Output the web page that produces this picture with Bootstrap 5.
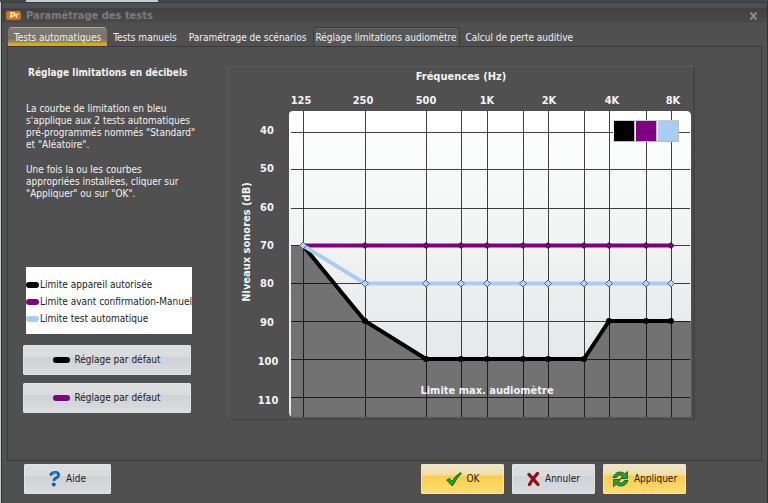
<!DOCTYPE html>
<html lang="fr">
<head>
<meta charset="utf-8">
<meta name="viewport" content="width=device-width, initial-scale=1">
<title>Paramétrage des tests</title>
<link rel="stylesheet" href="https://cdn.jsdelivr.net/npm/bootstrap@5.3.0/dist/css/bootstrap.min.css">
<style>
  body { background: #c4cccc; font-family: Tahoma, "DejaVu Sans Condensed", "DejaVu Sans", sans-serif; font-size: 10px; line-height: 12px; color: #f2f2f2; }
  .backdrop-strip { height: 2px; background: linear-gradient(to right, #45474c 0 26px, #c4d0d0 26px 158px, #45474c 158px); }
  .app-window { background: #505050; border: 1px solid #333; border-top-color: #3a3b40; margin-left: 1px; min-height: calc(100vh - 2px); }
  .title-bar { border-top: 5px solid #4d4f57; background: linear-gradient(#414141, #4a4a4a); height: 20px; padding: 0 9px 0 4px; color: #7c7c7c; }
  .title-bar h1 { font: bold 11px/14px "DejaVu Sans Condensed", "DejaVu Sans", sans-serif; }
  .close-btn { background: none; border: 0; padding: 0; line-height: 0; }
  .tab-strip { padding: 4px 6px 0; }
  .tab-strip .nav-link { color: #f0f0f0; padding: 4px 5px 3px; margin: 0; border: 1px solid transparent; border-bottom: 0; border-radius: 4px 4px 0 0; line-height: 12px; height: 20px; white-space: nowrap; }
  .tab-strip .nav-link.active { background: #575757; border-color: #3a3a3a; color: #f0f0f0; box-shadow: inset 0 1px #666; padding-left: 2px; padding-right: 2px; }
  .tab-strip .nav-link.hot { background: linear-gradient(#817a72 0, #77716b 55%, #b08f3c 78%, #d8a91e 80%, #d8a91e 100%); }
  .tab-panel { border: 1px solid #3a3a3a; margin: -1px 5px 0 5px; padding: 19px 66px 40px 15px; }
  .side { flex: 0 0 168px; min-width: 0; padding-top: 1px; }
  .side h2 { font-size: 10px; line-height: 12px; font-weight: bold; margin: 0 0 24px 5px; white-space: nowrap; }
  .side p { margin: 0 0 13px 3px; white-space: nowrap; }
  .legend-box { background: #fff; color: #222; margin: 67px 0 11px 3px; width: 166px; padding: 9px 0 7px; }
  .legend-box li { display: flex; align-items: center; height: 17px; gap: 1px; white-space: nowrap; }
  .stroke { display: inline-block; flex: none; width: 13px; height: 6px; border-radius: 3px; }
  .btn-app .stroke { width: 17px; }
  .ink-black { background: #000; }
  .ink-purple { background: #800080; }
  .ink-blue { background: #a8ccf2; }
  .btn-app { --bs-btn-color: #222; font-size: 10px; line-height: 12px; height: 30px; padding: 0; border: 1px solid #dfe1e3; border-radius: 1px; background: linear-gradient(#dcdedf 0, #d9dbdd 38%, #ced1d8 42%, #dadcde 100%); display: flex; align-items: center; justify-content: center; gap: 4px; color: #222; }
  .btn-app.gold { background: linear-gradient(#eee6c8 0, #f0dfa6 35%, #fbcd4b 40%, #fddc74 100%); border-color: #f2e6c0; }
  .chart-box { border: 1px solid #5b5b5b; border-right: 2px solid #434343; border-bottom-color: #434343; position: relative; margin-left: 37px; }
  .chart-box svg { display: block; width: 100%; height: auto; }
  .chart-box text { fill: #f4f4f4; font: bold 11px "DejaVu Sans Condensed", "DejaVu Sans", sans-serif; text-anchor: middle; }
  .ink-picker { position: absolute; top: 15%; right: 3%; }
  .ink-picker button { width: 22px; height: 22px; padding: 0; border: 1px solid #bbb; border-left-color: #eee; border-top-color: #ccc; }
  .footer-bar { padding: 3px 81px 9px 22px; }
  .footer-bar .btn-app { width: 83px; gap: 5px; }
  .footer-bar .help { width: 87px; }
</style>
<script src="https://cdn.jsdelivr.net/npm/bootstrap@5.3.0/dist/js/bootstrap.bundle.min.js"></script>
</head>
<body>
<div class="backdrop-strip"></div>
<div class="app-window d-flex flex-column">
  <header class="title-bar d-flex align-items-center justify-content-between">
    <div class="d-flex align-items-center gap-1">
      <svg width="16" height="9" viewBox="0 0 16 9" aria-hidden="true"><rect width="15" height="9" rx="2" fill="#cf7420"/><path d="M5 7V2h2q2 0 2 1.500T7 5H5M10.500 7V4q.5-1 2-.8" fill="none" stroke="#ffe9c8" stroke-width="1.400"/></svg>
      <h1 class="m-0">Paramétrage des tests</h1>
    </div>
    <button class="close-btn" type="button" aria-label="Fermer"><svg width="9" height="8" viewBox="0 0 9 8"><path d="M1.500.5l6 7M7.500.5l-6 7" stroke="#8c8c8c" stroke-width="2"/></svg></button>
  </header>
  <nav class="tab-strip nav nav-tabs border-0 flex-nowrap">
    <a class="nav-link hot" href="#">Tests automatiques</a>
    <a class="nav-link" href="#">Tests manuels</a>
    <a class="nav-link" href="#">Paramétrage de scénarios</a>
    <a class="nav-link active" href="#" aria-current="page">Réglage limitations audiomètre</a>
    <a class="nav-link" href="#">Calcul de perte auditive</a>
  </nav>
  <main class="tab-panel d-flex align-items-start flex-grow-1">
    <section class="side">
      <h2>Réglage limitations en décibels</h2>
      <p>La courbe de limitation en bleu<br>s'applique aux 2 tests automatiques<br>pré-programmés nommés "Standard"<br>et "Aléatoire".</p>
      <p>Une fois la ou les courbes<br>appropriées installées, cliquer sur<br>"Appliquer" ou sur "OK".</p>
      <ul class="legend-box list-unstyled">
        <li><span class="stroke ink-black"></span>Limite appareil autorisée</li>
        <li><span class="stroke ink-purple"></span>Limite avant confirmation-Manuel</li>
        <li><span class="stroke ink-blue"></span>Limite test automatique</li>
      </ul>
      <div class="d-grid gap-2">
        <button class="btn btn-app" type="button"><span class="stroke ink-black"></span>Réglage par défaut</button>
        <button class="btn btn-app" type="button"><span class="stroke ink-purple"></span>Réglage par défaut</button>
      </div>
    </section>
    <section class="chart-box flex-grow-1">
      <svg viewBox="0 0 464 352" role="img" aria-label="Niveaux sonores par fréquence">
        <defs>
          <linearGradient id="paper" x2="0" y2="1"><stop offset="0" stop-color="#fff"/><stop offset=".35" stop-color="#f4f5f5"/><stop offset=".8" stop-color="#e6e8e9"/></linearGradient>
          <marker id="dotBlack" markerUnits="userSpaceOnUse" markerWidth="8" markerHeight="8" refX="4" refY="4"><circle cx="4" cy="4" r="3"/></marker>
          <marker id="dotPurple" markerUnits="userSpaceOnUse" markerWidth="8" markerHeight="8" refX="4" refY="4"><path d="M4 1l3 3-3 3-3-3z" fill="#800080" stroke="#38003c"/></marker>
          <marker id="dotBlue" markerUnits="userSpaceOnUse" markerWidth="10" markerHeight="10" refX="5" refY="5"><path d="M5 1.500l3.500 3.500-3.500 3.500-3.500-3.500z" fill="#b4d4f6" stroke="#52677c"/></marker>
        </defs>
        <path d="M60 345V48q0-4 4-4h393q5 0 5 5v301H64q-4 0-4-5z" fill="url(#paper)"/>
        <path d="M62 178.500H74L136 254 197 292H355L380 254H462V350H62z" fill="#727272"/>
        <path d="M74.500 44V350M136.500 44V350M197.500 44V350M232.500 44V350M258.500 44V350M294.500 44V350M319.500 44V350M355.500 44V350M380.500 44V350M417.500 44V350M442.500 44V350M62 65.500H461M62 102.500H461M62 141.500H461M62 178.500H461M62 216.500H461M62 254.500H461M62 292.500H461M62 330.500H461" stroke="#000" stroke-opacity=".75"/>
        <path d="M74 178.500H442" stroke="#800080" stroke-width="4"/>
        <path d="M74 178.500L136 254 197 292 232 292 258 292 294 292 319 292 355 292 380 254 417 254 442 254" fill="none" stroke="#000" stroke-width="4" marker-mid="url(#dotBlack)" marker-end="url(#dotBlack)"/>
        <path d="M74 178.500H136H197H232H258H294H319H355H380H417H442" fill="none" marker-mid="url(#dotPurple)" marker-end="url(#dotPurple)"/>
        <path d="M74 178.500L136 216.500H197H232H258H294H319H355H380H417H442" fill="none" stroke="#a8ccf2" stroke-width="4" marker-start="url(#dotBlue)" marker-mid="url(#dotBlue)" marker-end="url(#dotBlue)"/>
        <g>
          <text x="232" y="13">Fréquences (Hz)</text>
          <text x="72" y="37">125</text><text x="134" y="37">250</text><text x="197" y="37">500</text><text x="258" y="37">1K</text><text x="320" y="37">2K</text><text x="383" y="37">4K</text><text x="444" y="37">8K</text>
          <text x="38" y="67">40</text><text x="38" y="105">50</text><text x="38" y="144">60</text><text x="38" y="182">70</text><text x="38" y="220">80</text><text x="38" y="259">90</text><text x="39" y="298">100</text><text x="39" y="337">110</text>
          <text transform="translate(21 175) rotate(-90)">Niveaux sonores (dB)</text>
          <text x="258" y="327">Limite max. audiomètre</text>
        </g>
      </svg>
      <div class="ink-picker d-flex">
        <button class="ink-black" type="button" aria-label="Noir"></button>
        <button class="ink-purple" type="button" aria-label="Violet"></button>
        <button class="ink-blue" type="button" aria-label="Bleu"></button>
      </div>
    </section>
  </main>
  <footer class="footer-bar d-flex align-items-center gap-2">
    <button class="btn btn-app help me-auto" type="button"><svg width="12" height="16" viewBox="0 0 12 16"><path d="M1.500 4.500q1-3 5-3 3.500 0 3 3-.5 2-3.500 3-1 .6-1 2.500" fill="none" stroke="#1763a8" stroke-width="3"/><circle cx="4.800" cy="13.500" r="2" fill="#1763a8"/><path d="M3 3q2-1.500 4.500-1" stroke="#4fa3dc" fill="none"/></svg>Aide</button>
    <button class="btn btn-app gold" type="button"><svg width="16" height="14" viewBox="0 0 16 14"><path d="M.8 8l2.700-1.500 2.500 3Q9.500 3.500 14.500.6l.8.7Q10.500 6 7 13.300H5.400z" fill="#1fa52b" stroke="#0b6a18"/></svg>OK</button>
    <button class="btn btn-app" type="button"><svg width="13" height="14" viewBox="0 0 13 14"><path d="M2 2.500Q5 5.500 11 12.500M10.500 1.500Q6 6 2.500 12.500" fill="none" stroke="#8d1218" stroke-width="3.200" stroke-linecap="round"/></svg>Annuler</button>
    <button class="btn btn-app gold" type="button"><svg width="17" height="16" viewBox="0 0 17 16"><g fill="#22a03a" stroke="#0b4f1a" stroke-width=".8"><path d="M1 6.500Q3 1 8.500 1q2.500 0 4.200 1.700L15.500.5V7.500H8.500L10.600 5Q7 2.500 4.500 6.500z"/><path d="M16 9.500Q14 15 8.500 15 6 15 4.300 13.300L1.500 15.500V8.500H8.500L6.400 11Q10 13.500 12.500 9.500z"/></g></svg>Appliquer</button>
  </footer>
</div>
</body>
</html>
